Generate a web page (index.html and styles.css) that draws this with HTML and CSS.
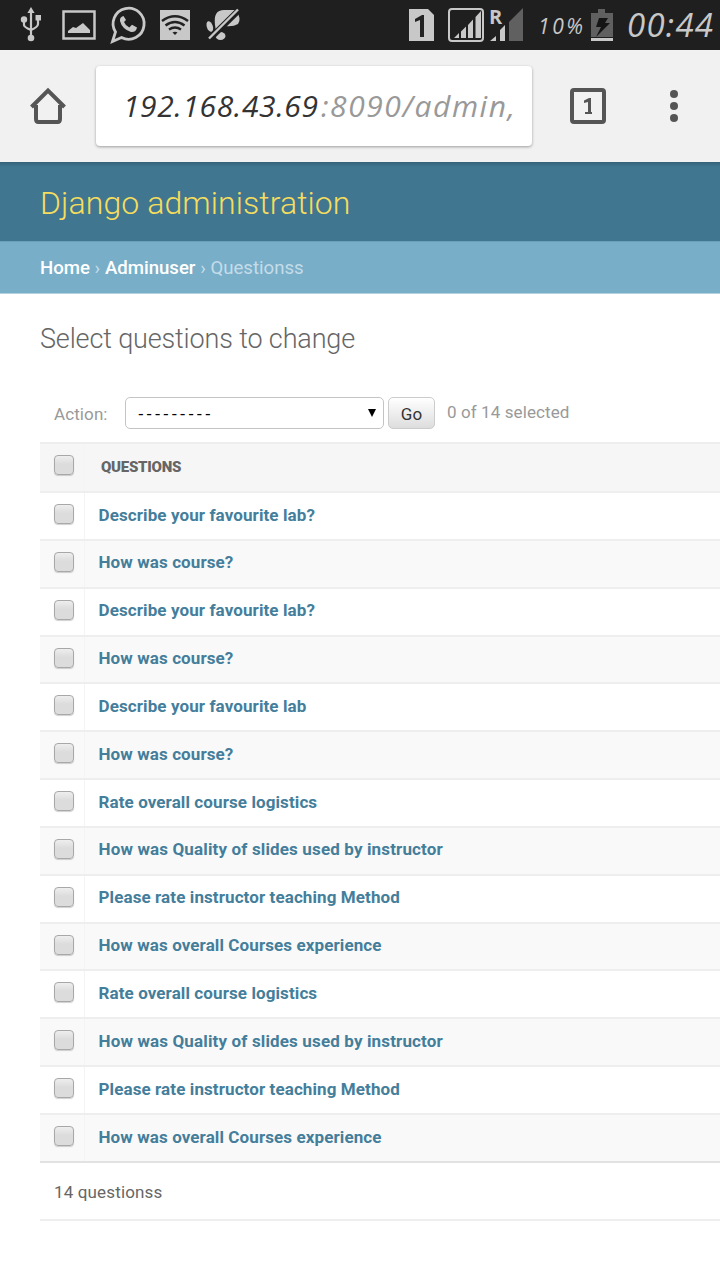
FILE: index.html
```html
<!DOCTYPE html>
<html lang="en">
<head>
<meta charset="utf-8">
<meta name="viewport" content="width=device-width">
<title>Select questions to change</title>
<link rel="stylesheet" href="styles.css">
</head>
<body>
<header class="status">
  <div class="status-left">
    <svg width="22" height="36" viewBox="0 0 22 36" fill="#c8c8c8"><path d="M11 0l3.600 6H7.400z"/><circle cx="11" cy="31" r="3.300"/><circle cx="4" cy="12.500" r="3.200"/><path d="M15.500 8h5.500v5.500h-5.500z"/><path d="M11 4v26M4 13v5q0 2 7 5M18 13v4q0 3-7 6" fill="none" stroke="#c8c8c8" stroke-width="2.200"/></svg>
    <svg width="34" height="30" viewBox="0 0 34 30"><rect x="1.500" y="1.500" width="31" height="27" fill="none" stroke="#c8c8c8" stroke-width="2.500"/><path d="M6 23v-2l5-4 3 1 7-5 7 7v3z" fill="#c8c8c8"/></svg>
    <svg width="36" height="38" viewBox="0 0 36 38"><path d="M2.500 35.500l3-9.500A15.500 15.500 0 1 1 11.500 31.500z" fill="none" stroke="#c8c8c8" stroke-width="2.800"/><path d="M13.500 10q-4 1-3.500 5 2 8 11 11 5 .5 6-4.500l-5-2.700-2.700 2.700q-4-2-5.300-5.500l2-2z" fill="#c8c8c8"/></svg>
    <svg width="30" height="30" viewBox="0 0 30 30"><path fill="#c8c8c8" d="M0 0h30v30H0z"/><path d="M2 11q13-9.500 26 0M5.500 15.500q9.500-7 19 0M9 19.500q6-4 12 0" fill="none" stroke="#222" stroke-width="2.500"/><path d="M12.500 22.500q2.500-1.500 5 0L15 25z" fill="#222"/></svg>
    <svg width="34" height="32" viewBox="0 0 34 32"><g fill="#c8c8c8"><ellipse cx="3.800" cy="17.500" rx="3" ry="5.500" transform="rotate(-18 3.800 17.500)"/><path d="M9 16Q7 1 18 1H30Q36 10 32 15 27 18 19 17L14 22 10 22z"/><ellipse cx="14.500" cy="27" rx="5" ry="4"/></g><path d="M4.500 29L33 1" stroke="#1f1f1f" stroke-width="6"/><path d="M3 29.500L32 .5" stroke="#c8c8c8" stroke-width="2.400"/></svg>
  </div>
  <div class="status-right">
    <svg class="sim" width="26" height="32" viewBox="0 0 26 32"><path fill="#c8c8c8" d="M0 0h19l6 6v26H0z"/><path fill="#222" d="M6 10l7-4h2v22h-4V11l-5 2z"/></svg>
    <svg class="signal" width="36" height="34" viewBox="0 0 36 34"><rect x="1" y="1" width="34" height="32" rx="3" fill="none" stroke="#c8c8c8" stroke-width="2"/><path fill="#c8c8c8" d="M6 30l5-5v5zM13 23.500l5-5V30h-5zM20 17l5-5.500V30h-5zM27.500 9L33 3v27h-5.500z"/></svg>
    <svg class="roaming" width="34" height="34" viewBox="0 0 34 34"><text x="-1" y="16" class="roam">R</text><path fill="#c8c8c8" d="M0 33l6-5v5zM10 22l5-5v16h-5z"/><path fill="#606060" d="M19 14L33 0v33H19z"/></svg>
    <svg class="percent" width="46" height="34"><text x="0" y="26" textLength="45">10%</text></svg>
    <svg class="battery" width="22" height="32" viewBox="0 0 22 32"><path fill="#606060" d="M7 0h7v4h8v24H0V4h7z"/><path fill="#c8c8c8" d="M0 29h22v3H0z"/><path fill="#151515" d="M8 9h9l-3 5h5L5 28l5-10H5z"/></svg>
    <svg class="clock" width="88" height="40"><text x="0" y="32" textLength="86">00:44</text></svg>
  </div>
</header>
<nav class="browser">
  <svg class="home" width="36" height="36" viewBox="0 0 36 36" fill="none" stroke="#555" stroke-width="4"><path d="M1.500 19L18 2.500 34.500 19M6 17v14q0 3 2.500 3h19q2.500 0 2.500-3V17"/></svg>
  <div class="url"><svg width="396" height="50"><text x="0" y="36" textLength="195" class="host">192.168.43.69</text><text x="198" y="36" textLength="194" class="path">:8090/admin,</text></svg></div>
  <div class="tabs"><svg width="10" height="18" viewBox="0 0 10 18"><path fill="#555" d="M1 3.500L6 1h2v14h1v2H2v-2h3V5L1 6z"/></svg></div>
  <div class="menu"><i></i><i></i><i></i></div>
</nav>
<div class="branding"><h1>Django administration</h1></div>
<div class="crumbs"><a>Home</a><span class="sep">›</span><a>Adminuser</a><span class="sep">›</span><span class="here">Questionss</span></div>
<main>
  <h2>Select questions to change</h2>
  <div class="actions">
    <span class="label">Action:</span>
    <div class="select"><span>---------</span><svg width="8" height="8"><path d="M0 0h8L4 8z"/></svg></div>
    <div class="go">Go</div>
    <span class="count">0 of 14 selected</span>
  </div>
  <div class="row head"><div class="cell"><i class="box"></i></div><b>QUESTIONS</b></div>
  <div class="row"><div class="cell"><i class="box"></i></div><a>Describe your favourite lab?</a></div>
  <div class="row"><div class="cell"><i class="box"></i></div><a>How was course?</a></div>
  <div class="row"><div class="cell"><i class="box"></i></div><a>Describe your favourite lab?</a></div>
  <div class="row"><div class="cell"><i class="box"></i></div><a>How was course?</a></div>
  <div class="row"><div class="cell"><i class="box"></i></div><a>Describe your favourite lab</a></div>
  <div class="row"><div class="cell"><i class="box"></i></div><a>How was course?</a></div>
  <div class="row"><div class="cell"><i class="box"></i></div><a>Rate overall course logistics</a></div>
  <div class="row"><div class="cell"><i class="box"></i></div><a class="wide">How was Quality of slides used by instructor</a></div>
  <div class="row"><div class="cell"><i class="box"></i></div><a>Please rate instructor teaching Method</a></div>
  <div class="row"><div class="cell"><i class="box"></i></div><a>How was overall Courses experience</a></div>
  <div class="row"><div class="cell"><i class="box"></i></div><a>Rate overall course logistics</a></div>
  <div class="row"><div class="cell"><i class="box"></i></div><a class="wide">How was Quality of slides used by instructor</a></div>
  <div class="row"><div class="cell"><i class="box"></i></div><a>Please rate instructor teaching Method</a></div>
  <div class="row last"><div class="cell"><i class="box"></i></div><a>How was overall Courses experience</a></div>
  <div class="total">14 questionss</div>
</main>
</body>
</html>
```
FILE: styles.css
```css
* { box-sizing: border-box; }
body { margin: 0; width: 720px; height: 1280px; overflow: hidden; background: #fff; font-family: Roboto, sans-serif; color: #666; }
svg { display: block; flex: none; overflow: visible; }
.status { height: 50px; background: #1f1f1f; display: flex; justify-content: space-between; }
.status-left { display: flex; align-items: center; padding-left: 20px; }
.status-left svg { margin-right: 20px; }
.status-left svg:nth-child(2) { margin-right: 14px; }
.status-left svg:nth-child(3) { margin-right: 14px; }
.status-left svg:nth-child(4) { margin-right: 16px; }
.status-right { display: flex; align-items: center; }
.signal { margin-left: 13px; }
.roaming { margin-left: 6px; }
.percent { margin-left: 14px; }
.battery { margin-left: 7px; }
.clock { margin-left: 14px; margin-right: 5px; }
.status text { fill: #c8c8c8; }
.roam { font: bold 20px "Open Sans", sans-serif; }
.percent text { font: italic 21px "Open Sans", sans-serif; }
.clock text { font: italic 33px "Open Sans", sans-serif; }
.browser { height: 112px; background: #f1f1f1; display: flex; align-items: center; padding-left: 30px; }
.url { margin-left: 30px; width: 436px; height: 80px; border-radius: 4px; background: #fff; box-shadow: 0 1px 3px rgba(0,0,0,.35); padding: 15px 0 0 27px; overflow: hidden; }
.url text { font: italic 500 30px "Open Sans", sans-serif; }
.url .host { fill: #333; }
.url .path { fill: #999; }
.tabs { margin-left: 38px; width: 36px; height: 36px; border: 4px solid #555; border-radius: 4px; display: grid; place-items: center; }
.menu { margin-left: 64px; display: grid; gap: 4px; }
.menu i { width: 8px; height: 8px; border-radius: 50%; background: #555; }
.branding { height: 79px; background: linear-gradient(#35627b, #417690 5px); padding-left: 40px; }
h1 { margin: 0; font-size: 32px; font-weight: 300; line-height: 82px; color: #f5dd5d; letter-spacing: .09px; white-space: nowrap; }
.crumbs { height: 53px; background: #79aec8; border-top: 1px solid #6ba0ba; border-bottom: 1px solid #b3d2e0; padding-left: 40px; display: flex; line-height: 52px; font-size: 18.600px; color: #c4dce8; }
.crumbs a { color: #fff; font-weight: 500; }
.sep { width: 15px; text-align: center; }
main { padding-left: 40px; }
h2 { margin: 0; padding-top: 28px; height: 103px; font-size: 27px; font-weight: 300; line-height: 34px; color: #666; letter-spacing: -.15px; white-space: nowrap; }
.actions { height: 45px; display: flex; padding-left: 14px; font-size: 17px; color: #999; letter-spacing: .1px; line-height: 34px; }
.label { width: 71px; }
.select { width: 259px; height: 32px; border: 1.500px solid #c4c4c4; border-radius: 5px; display: flex; align-items: center; justify-content: space-between; padding: 0 7px 0 12px; color: #000; }
.select span { padding-top: 1px; font-weight: 500; font-family: "Liberation Sans", sans-serif; letter-spacing: 2.700px; }
.go { width: 47px; height: 32px; margin-left: 4px; border: 1.500px solid #ccc; border-radius: 5px; background: linear-gradient(#fff, #ddd); color: #333; text-align: center; line-height: 33px; }
.count { margin-left: 12px; line-height: 31px; }
.row { height: 47.857px; border-bottom: 2px solid #eee; display: flex; align-items: center; background: #fff; font-size: 17px; font-weight: 700; }
.row:nth-of-type(even) { background: #f9f9f9; }
.row.head { height: 51px; border-top: 2px solid #eee; background: #f6f6f6; font-size: 15px; }
.cell { width: 45px; height: 100%; padding: 11px 0 0 14px; border-right: 1px solid #f4f4f4; }
.box { display: block; width: 20px; height: 20px; border: 1.500px solid #a8a8a8; border-radius: 4px; background: linear-gradient(#eee, #dcdcdc 45%); box-shadow: 0 1px 1px rgba(0,0,0,.18); }
.row a { margin: 0 0 2.700px 13.500px; color: #447e9b; letter-spacing: .1px; }
.row .wide { letter-spacing: .145px; }
.row b { margin: 0 0 1px 16px; letter-spacing: -.25px; }
.row.last { border-color: #e2e2e2; }
.total { height: 58px; border-bottom: 2px solid #eee; padding-left: 14px; font-size: 17px; line-height: 59px; letter-spacing: .15px; }
```
